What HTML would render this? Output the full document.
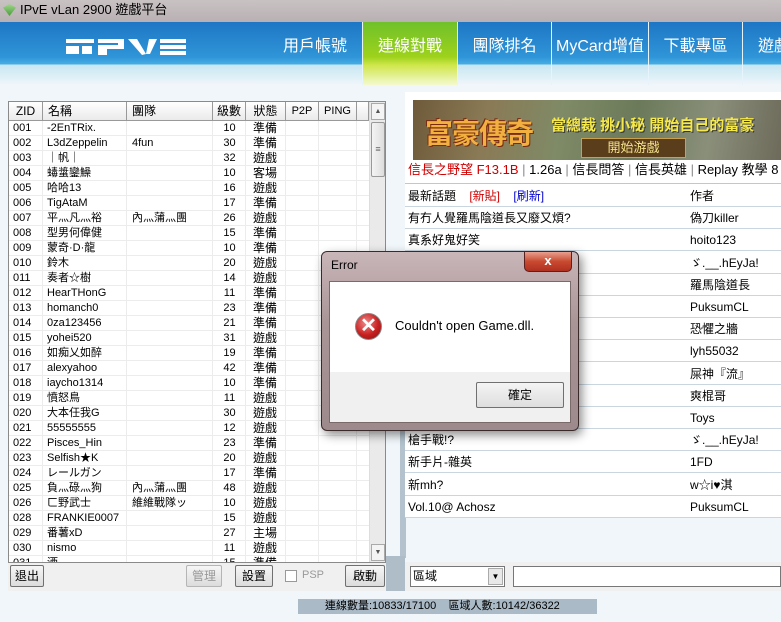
<!DOCTYPE html>
<html><head><meta charset="utf-8">
<style>
*{margin:0;padding:0;box-sizing:border-box}
body{width:781px;height:622px;overflow:hidden;background:#f1f6fa;font-family:"Liberation Sans","Noto Sans CJK TC",sans-serif;font-size:12px;color:#000;position:relative}
.abs{position:absolute}
#title{left:0;top:0;width:781px;height:22px;background:linear-gradient(#c9c2c3,#b8b0b2);font-size:13px;line-height:20px;padding-left:20px}
#nav{left:0;top:22px;width:781px;height:63px;background:linear-gradient(#1e76c4 0,#2f95d8 35px,#46ade3 42px,#c8e6f2 43px,#dff0f7 55px,#f1f6fa 63px)}
.tab{position:absolute;top:0;height:63px;color:#fff;font-size:16px;text-align:center;line-height:50px;border-left:1px solid #e8f4fb}
.tab.on{background:linear-gradient(#6fc12a 0,#9ed21c 35px,#cfe64a 43px,#f5f9cf 63px)}
#lt{left:8px;top:101px;width:378px;height:462px;background:#fff;border:1px solid #8a8a8a;overflow:hidden}
.hd{position:absolute;top:0;height:19px;background:linear-gradient(#fff,#eaeaea);border-right:1px solid #999;border-bottom:1px solid #999;text-align:center;line-height:18px;font-size:12px}
.row{position:absolute;left:0;width:360px;height:15px;border-bottom:1px solid #ececec;font-size:11px;line-height:15px}
.row span{position:absolute;top:0}
.vl{position:absolute;top:19px;bottom:0;width:1px;background:#ececec}
.btn{position:absolute;height:22px;border:1px solid #707070;border-radius:2px;background:linear-gradient(#f6f6f6,#dcdcdc);text-align:center;line-height:20px;font-size:12px}
#rp{left:405px;top:92px;width:376px;height:426px;background:#fff}
.rr{position:absolute;left:0;width:376px;height:22px;border-bottom:1px solid #c9d6e0;font-size:12px;line-height:22px;padding-left:3px}
.rr b{font-weight:normal;position:absolute;left:285px}
</style></head><body>
<div class="abs" id="title"><span style="position:absolute;left:3px;top:4px;width:13px;height:12px;background:linear-gradient(#9fd88a,#4a9c3a);clip-path:polygon(0 30%,50% 0,100% 30%,50% 100%)"></span>IPvE vLan 2900 遊戲平台</div>
<div class="abs" id="nav">
<svg class="abs" style="left:64px;top:16px" width="124" height="18" viewBox="0 0 124 18" fill="#fff">
<rect x="2" y="1" width="28" height="4"/><rect x="2" y="8" width="13" height="8"/><rect x="18" y="8" width="10" height="8"/>
<rect x="34" y="1" width="26" height="4"/><rect x="34" y="7" width="26" height="4"/><rect x="34" y="11" width="9" height="6"/><rect x="54" y="4" width="6" height="4"/>
<polygon points="64,1 73,1 82,16 78,17"/><polygon points="85,1 93,1 86,16 82,16"/>
<rect x="96" y="1" width="26" height="4"/><rect x="96" y="7" width="26" height="4"/><rect x="96" y="13" width="26" height="4"/>
</svg>
<div class="tab" style="left:268px;width:94px;border-left:none">用戶帳號</div>
<div class="tab on" style="left:362px;width:95px">連線對戰</div>
<div class="tab" style="left:457px;width:94px">團隊排名</div>
<div class="tab" style="left:551px;width:97px">MyCard增值</div>
<div class="tab" style="left:648px;width:94px">下載專區</div>
<div class="tab" style="left:742px;width:60px;text-align:left;padding-left:15px">遊戲</div>
</div>

<div class="abs" id="lt">
<div class="hd" style="left:0;width:34px">ZID</div>
<div class="hd" style="left:34px;width:84px;text-align:left;padding-left:5px">名稱</div>
<div class="hd" style="left:118px;width:86px;text-align:left;padding-left:5px">團隊</div>
<div class="hd" style="left:204px;width:33px">級數</div>
<div class="hd" style="left:237px;width:40px">狀態</div>
<div class="hd" style="left:277px;width:33px;font-size:11px">P2P</div>
<div class="hd" style="left:310px;width:38px;font-size:11px">PING</div>
<div class="hd" style="left:348px;width:12px"></div>
<div class="vl" style="left:33px"></div><div class="vl" style="left:117px"></div><div class="vl" style="left:203px"></div><div class="vl" style="left:236px"></div><div class="vl" style="left:276px"></div><div class="vl" style="left:309px"></div><div class="vl" style="left:347px"></div>
<div id="rows"></div>
<div style="position:absolute;left:360px;top:0;width:17px;height:460px;background:#eaeaea;border-left:1px solid #ddd">
<div style="position:absolute;left:1px;top:1px;width:14px;height:17px;border:1px solid #aaa;background:#f4f4f4;font-size:7px;text-align:center;line-height:15px;color:#555">▲</div>
<div style="position:absolute;left:1px;top:20px;width:14px;height:55px;border:1px solid #999;border-radius:2px;background:linear-gradient(90deg,#f4f4f4,#ddd);font-size:9px;text-align:center;line-height:52px;color:#666">≡</div>
<div style="position:absolute;left:1px;top:442px;width:14px;height:17px;border:1px solid #aaa;background:#f4f4f4;font-size:7px;text-align:center;line-height:15px;color:#555">▼</div>
</div>
</div>

<div class="abs" style="left:400px;top:330px;width:6px;height:228px;background:#b3c2cd"></div>
<div class="abs" style="left:8px;top:563px;width:378px;height:28px;background:#f0f0f0"></div>
<div class="abs" style="left:386px;top:556px;width:19px;height:35px;background:#aebdc8"></div>
<div class="abs" style="left:405px;top:562px;width:376px;height:29px;background:#f0f0f0"></div>
<div class="btn" style="left:10px;top:565px;width:34px">退出</div>
<div class="btn" style="left:186px;top:565px;width:36px;color:#999;border-color:#b5b5b5">管理</div>
<div class="btn" style="left:235px;top:565px;width:38px">設置</div>
<div class="abs" style="left:285px;top:570px;width:12px;height:12px;border:1px solid #999;background:#fff"></div>
<div class="abs" style="left:302px;top:569px;color:#999;font-size:11px">PSP</div>
<div class="btn" style="left:345px;top:565px;width:40px">啟動</div>
<div class="abs" style="left:410px;top:566px;width:95px;height:21px;border:1px solid #777;background:#fff;line-height:19px;padding-left:2px">區域<span style="position:absolute;right:1px;top:1px;width:15px;height:17px;background:#e8e8e8;border:1px solid #aaa;font-size:8px;text-align:center;line-height:15px">▼</span></div>
<div class="abs" style="left:513px;top:566px;width:268px;height:21px;border:1px solid #777;background:#fff"></div>
<div class="abs" style="left:298px;top:599px;width:299px;height:15px;background:#aabac6;font-size:11px;line-height:15px;padding-left:27px">連線數量:10833/17100&nbsp;&nbsp;&nbsp;&nbsp;區域人數:10142/36322</div>

<div class="abs" id="rp">
<div style="position:absolute;left:8px;top:8px;width:368px;height:60px;background:linear-gradient(100deg,#6e5a3a 0,#8a7a55 20%,#7f8a66 40%,#6b7a5a 60%,#8a8f7a 80%,#6d6a5a 100%)">
<div style="position:absolute;left:12px;top:12px;font-size:28px;color:#f2b040;font-weight:bold;text-shadow:1px 1px 0 #7a2a10,-1px -1px 0 #7a2a10;letter-spacing:-1px">富豪傳奇</div>
<div style="position:absolute;left:138px;top:14px;font-size:15px;color:#f5e84a;font-weight:bold;text-shadow:1px 1px 0 #333">當總裁 挑小秘 開始自己的富豪</div>
<div style="position:absolute;left:168px;top:38px;width:105px;height:20px;background:#5a3d1a;border:1px solid #c8a050;color:#f3e08a;font-size:13px;text-align:center;line-height:18px">開始游戲</div>
</div>
<div style="position:absolute;left:3px;top:69px;font-size:13px;white-space:nowrap;line-height:18px"><span style="color:#c00">信長之野望 F13.1B</span> <span style="color:#888">|</span> 1.26a <span style="color:#888">|</span> 信長問答 <span style="color:#888">|</span> 信長英雄 <span style="color:#888">|</span> Replay 教學 8</div>
<div style="position:absolute;left:0;top:91px;width:376px;height:1px;background:#bcc9d3"></div>
<div id="rrows"></div>
</div>

<!-- dialog -->
<div class="abs" style="left:321px;top:251px;width:258px;height:180px;border:1px solid #3a2a2a;border-radius:6px;background:linear-gradient(#c9b6b8,#a99496 40%,#9d8a8c);box-shadow:3px 4px 10px rgba(0,0,0,.45)">
<div style="position:absolute;left:9px;top:6px;font-size:12px;color:#000">Error</div>
<div style="position:absolute;left:202px;top:0;width:48px;height:20px;border:1px solid #5a2020;border-top:none;border-radius:0 0 5px 5px;background:linear-gradient(#e8a090,#c84a30 50%,#b03020);color:#fff;font-weight:bold;text-align:center;line-height:18px;font-size:13px">x</div>
<div style="position:absolute;left:7px;top:29px;width:242px;height:142px;border:1px solid #7a6a6a;background:#f0f0f0">
<div style="position:absolute;left:0;top:0;width:240px;height:90px;background:#fff"></div>
<div style="position:absolute;left:25px;top:31px;width:27px;height:27px;border-radius:50%;background:radial-gradient(circle at 40% 35%,#f08a8a,#c82020 55%,#8a1010);border:1px solid #888;color:#fff;font-size:20px;font-weight:bold;text-align:center;line-height:25px">✕</div>
<div style="position:absolute;left:65px;top:36px;font-size:13px">Couldn't open Game.dll.</div>
<div style="position:absolute;left:146px;top:100px;width:88px;height:26px;border:1px solid #707070;border-radius:2px;background:linear-gradient(#f4f4f4,#dedede);text-align:center;line-height:24px">確定</div>
</div>
</div>

<script>
var d=[["001","-2EnTRix.","","10","準備"],["002","L3dZeppelin","4fun","30","準備"],["003","｜帆｜","","32","遊戲"],["004","蝳螀鑾鱢","","10","客場"],["005","哈哈13","","16","遊戲"],["006","TigAtaM","","17","準備"],["007","平灬凡灬裕","內灬蒲灬團","26","遊戲"],["008","型男何偉健","","15","準備"],["009","蒙奇·D·龍","","10","準備"],["010","鈴木","","20","遊戲"],["011","奏者☆樹","","14","遊戲"],["012","HearTHonG","","11","準備"],["013","homanch0","","23","準備"],["014","0za123456","","21","準備"],["015","yohei520","","31","遊戲"],["016","如痴乂如醉","","19","準備"],["017","alexyahoo","","42","準備"],["018","iaycho1314","","10","準備"],["019","憤怒鳥","","11","遊戲"],["020","大本任我G","","30","遊戲"],["021","55555555","","12","遊戲"],["022","Pisces_Hin","","23","準備"],["023","Selfish★K","","20","遊戲"],["024","レールガン","","17","準備"],["025","負灬碌灬狗","內灬蒲灬團","48","遊戲"],["026","ㄈ野武士","維維戰隊ッ","10","遊戲"],["028","FRANKIE0007","","15","遊戲"],["029","番薯xD","","27","主場"],["030","nismo","","11","遊戲"],["031","酒","","15","準備"]];
var h="";d.forEach(function(r,i){h+='<div class="row" style="top:'+(19+15*i)+'px"><span style="left:4px">'+r[0]+'</span><span style="left:38px">'+r[1]+'</span><span style="left:123px">'+r[2]+'</span><span style="left:204px;width:33px;text-align:center">'+r[3]+'</span><span style="left:244px;font-size:12px">'+r[4]+'</span></div>'});
document.getElementById("rows").innerHTML=h;
var t=[['最新話題&nbsp;&nbsp;&nbsp;&nbsp;<span style="color:#c00">[新貼]</span>&nbsp;&nbsp;&nbsp;&nbsp;<span style="color:#00c">[刷新]</span>',"作者"],["有冇人覺羅馬陰道長又廢又煩?","偽刀killer"],["真系好鬼好笑","hoito123"],["╮__.hEyja!","ゞ.__.hEyJa!"],["[三國1hr一千兵]","羅馬陰道長"],["","PuksumCL"],["","恐懼之牆"],["","lyh55032"],["","屎神『流』"],["er 每晚8點 人數已上","爽棍哥"],["頭) 交流戰暫約定係星","Toys"],["槍手戰!?","ゞ.__.hEyJa!"],["新手片-雜英","1FD"],["新mh?","w☆i♥淇"],["Vol.10@ Achosz","PuksumCL"]];
var g="";t.forEach(function(r,i){g+='<div class="rr" style="top:'+(93+22.2*i)+'px">'+r[0]+'<b>'+r[1]+'</b></div>'});
document.getElementById("rrows").innerHTML=g;
</script>
</body></html>
